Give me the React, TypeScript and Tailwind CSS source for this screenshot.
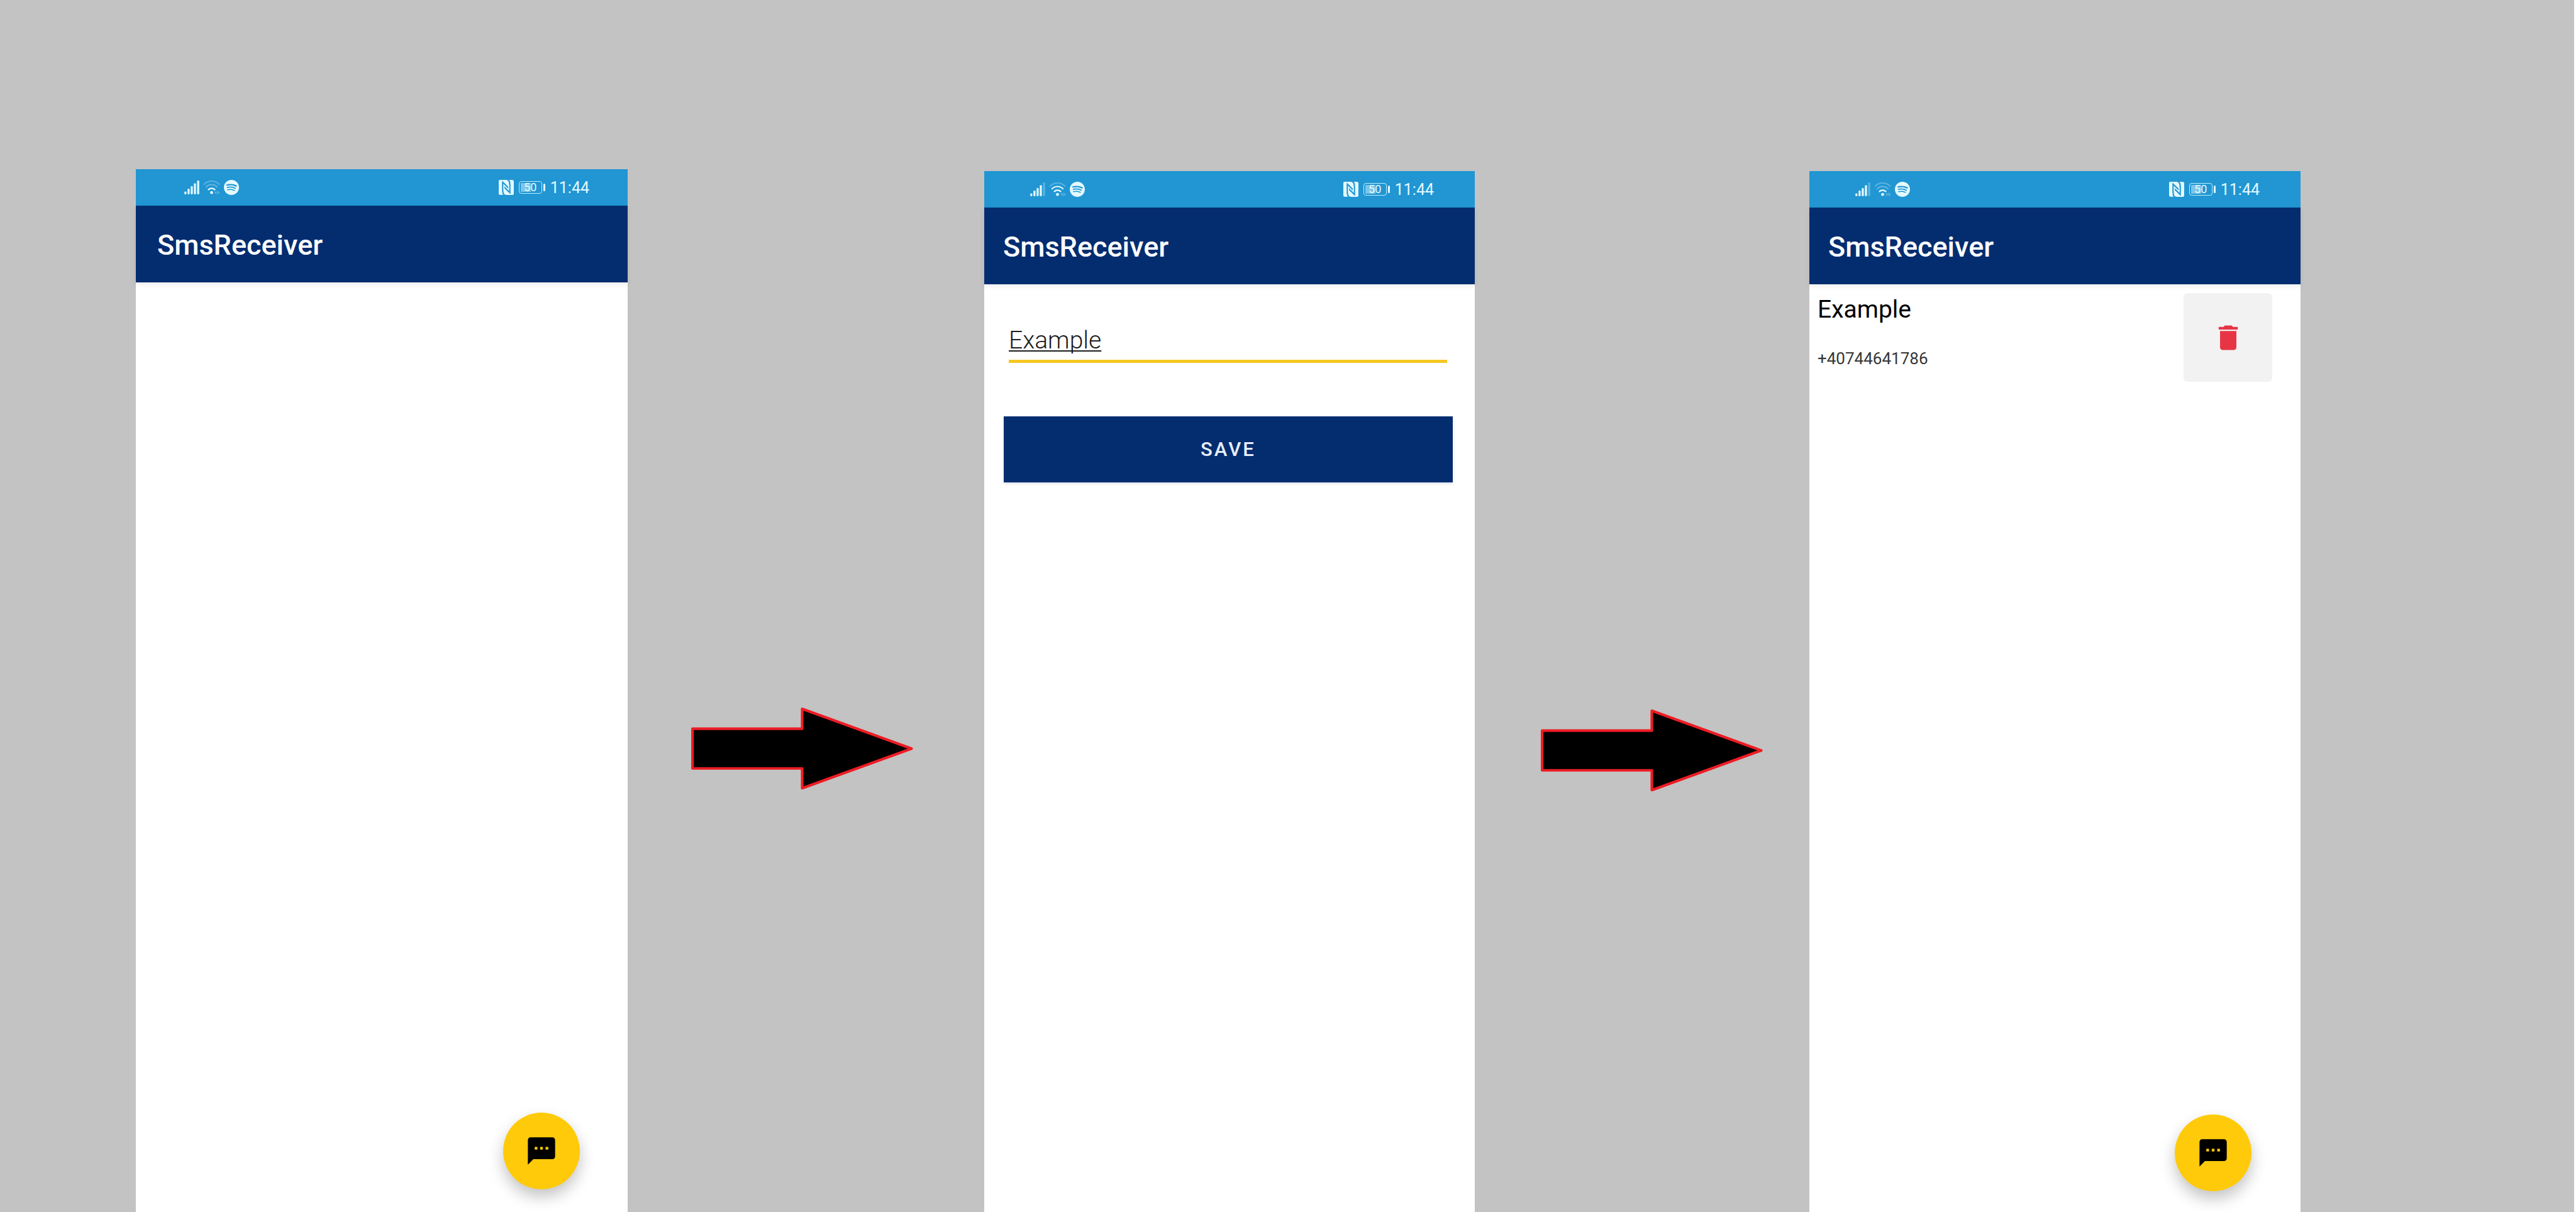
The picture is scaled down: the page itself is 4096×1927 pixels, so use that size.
import type { ReactNode } from "react";
import { SiNfc, SiSpotify } from "react-icons/si";

type Inset = "wide" | "narrow";

function SignalIcon({ weak }: { weak: boolean }) {
  return (
    <svg viewBox="0 0 29 27" className="h-[22px] w-6" fill="currentColor" aria-hidden="true">
      <rect x="0" y="21.5" width="4" height="5.5" rx="1.4" />
      <rect x="6.2" y="16" width="4" height="11" rx="1.4" />
      <rect x="12.4" y="11" width="4" height="16" rx="1.4" />
      <rect x="18.6" y="5.5" width="4" height="21.5" rx="1.4" />
      <rect x="24.9" y="0" width="4" height="27" rx="1.4" opacity={weak ? 0.3 : 1} />
    </svg>
  );
}

function WifiIcon({ strong }: { strong: boolean }) {
  return (
    <svg viewBox="0 0 32 27" className="h-[22px] w-[27px]" fill="none" stroke="currentColor" strokeWidth="2.4" strokeLinecap="round" aria-hidden="true">
      <path d="M1.2 7.5C9.5 -0.8 22.5 -0.8 30.8 7.5" opacity="0.3" />
      <path d="M5.3 12.6C11.3 6.6 20.7 6.6 26.7 12.6" opacity={strong ? 1 : 0.35} />
      <path d="M10 17.6C13.4 14.4 18.6 14.4 22 17.6" strokeWidth="3" />
      <circle cx="16" cy="23.6" r="2.9" fill="currentColor" stroke="none" />
      <g fill="currentColor" stroke="none" opacity="0.32">
        <path d="M25.4 20.4v6.2L21.6 23.5z" />
        <rect x="26.6" y="20" width="1" height="7" />
        <path d="M28.6 20.4v6.2L32 23.5z" />
      </g>
    </svg>
  );
}

function Battery() {
  return (
    <div className="flex items-center gap-0.5">
      <div className="relative flex h-5 w-[37px] items-center justify-center rounded-sm border border-[#b9f0ff]">
        <span className="absolute inset-y-0.5 left-0.5 w-4 bg-[#7cc6ea]" />
        <span className="relative text-lg leading-none">50</span>
      </div>
      <span className="h-3 w-[3px] rounded-sm bg-current" />
    </div>
  );
}

function StatusBar({ inset, weakSignal, strongWifi }: { inset: Inset; weakSignal: boolean; strongWifi: boolean }) {
  return (
    <div
      className={`flex h-[58px] items-center justify-between bg-[#2196d3] text-[#e3faff] ${
        inset === "wide" ? "pr-[61px] pl-[77px]" : "pr-[65px] pl-[73px]"
      }`}
    >
      <div className="flex items-center gap-1.5">
        <SignalIcon weak={weakSignal} />
        <WifiIcon strong={strongWifi} />
        <SiSpotify className="size-6" aria-hidden="true" />
      </div>
      <div className="flex items-center gap-2">
        <SiNfc className="size-6" aria-hidden="true" />
        <Battery />
        <span className="text-[25px] leading-none">11:44</span>
      </div>
    </div>
  );
}

function Phone({
  className,
  inset,
  weakSignal = false,
  strongWifi = false,
  children,
}: {
  className: string;
  inset: Inset;
  weakSignal?: boolean;
  strongWifi?: boolean;
  children: ReactNode;
}) {
  return (
    <section className={`flex flex-col bg-white ${className}`}>
      <StatusBar inset={inset} weakSignal={weakSignal} strongWifi={strongWifi} />
      <header
        className={`flex h-[122px] items-center bg-[#042d70] pt-1 shadow-[0_3px_8px_rgba(0,0,0,0.08)] ${
          inset === "wide" ? "px-[34px]" : "px-[30px]"
        }`}
      >
        <h1 className="text-[45px] leading-[52px] font-medium text-white">SmsReceiver</h1>
      </header>
      {children}
    </section>
  );
}

function MessageButton({ className }: { className: string }) {
  return (
    <button
      type="button"
      aria-label="New message"
      className={`mt-auto flex size-[122px] items-center justify-center self-end rounded-full bg-[#ffca0a] text-black shadow-[0_12px_24px_rgba(0,0,0,0.24)] ${className}`}
    >
      <svg viewBox="0 0 24 24" className="size-[52px]" fill="currentColor" aria-hidden="true">
        <path d="M20 2H4c-1.1 0-1.99.9-1.99 2L2 22l4-4h14c1.1 0 2-.9 2-2V4c0-1.1-.9-2-2-2zM9 11H7V9h2v2zm4 0h-2V9h2v2zm4 0h-2V9h2v2z" />
      </svg>
    </button>
  );
}

function Arrow({ className }: { className: string }) {
  return (
    <svg viewBox="0 0 425 157" className={`w-full self-start ${className}`} aria-hidden="true">
      <path
        d="M2.5 40.5H212.5V2.5L422 78.5L212.5 154.5V116.5H2.5Z"
        fill="#000"
        stroke="#ed1c24"
        strokeWidth="5"
        strokeLinejoin="round"
      />
    </svg>
  );
}

export default function App() {
  return (
    <main className="grid min-h-screen grid-cols-[216fr_782fr_101fr_353fr_113fr_780fr_105fr_353fr_74fr_781fr_435fr] border-r-[3px] border-white bg-[#c3c3c3] font-[Roboto,sans-serif]">
      <Phone className="col-start-2 mt-[269px]" inset="wide">
        <MessageButton className="mr-[76px] mb-9" />
      </Phone>

      <Arrow className="col-start-4 mt-[1125px]" />

      <Phone className="col-start-6 mt-[272px]" inset="narrow" weakSignal strongWifi>
        <form className="flex flex-col pt-[66px] pr-[35px] pl-[31px]" onSubmit={(e) => e.preventDefault()}>
          <input
            type="text"
            aria-label="Sender name"
            defaultValue="Example"
            className="mr-[9px] ml-2 border-b-[5px] border-[#f5c822] pb-2 text-[39px] leading-[46px] font-light text-[#1c1c1c] underline decoration-2 underline-offset-3 outline-none [text-decoration-skip-ink:none]"
          />
          <button
            type="submit"
            className="mt-[85px] h-[105px] bg-[#042d70] text-[31px] leading-9 font-medium tracking-widest text-[#e8eefa] shadow-[0_2px_4px_rgba(4,45,112,0.15)]"
          >
            SAVE
          </button>
        </form>
      </Phone>

      <Arrow className="col-start-8 mt-[1128px]" />

      <Phone className="col-start-10 mt-[272px]" inset="narrow" weakSignal>
        <article className="flex items-start justify-between pt-3.5 pr-[45px] pl-[13px]">
          <div className="flex flex-col gap-10 pt-[3px]">
            <h2 className="text-[39px] leading-[46px] text-black">Example</h2>
            <p className="text-[26px] leading-[30px] text-[#363636]">+40744641786</p>
          </div>
          <button
            type="button"
            aria-label="Delete Example"
            className="flex size-[141px] items-center justify-center rounded-md bg-[#f2f2f2] text-[#e73546]"
          >
            <svg viewBox="0 0 24 24" className="size-[52px]" fill="currentColor" aria-hidden="true">
              <path d="M6 19c0 1.1.9 2 2 2h8c1.1 0 2-.9 2-2V7H6v12zM19 4h-3.5l-1-1h-5l-1 1H5v2h14V4z" />
            </svg>
          </button>
        </article>
        <MessageButton className="mr-[78px] mb-[33px]" />
      </Phone>
    </main>
  );
}
